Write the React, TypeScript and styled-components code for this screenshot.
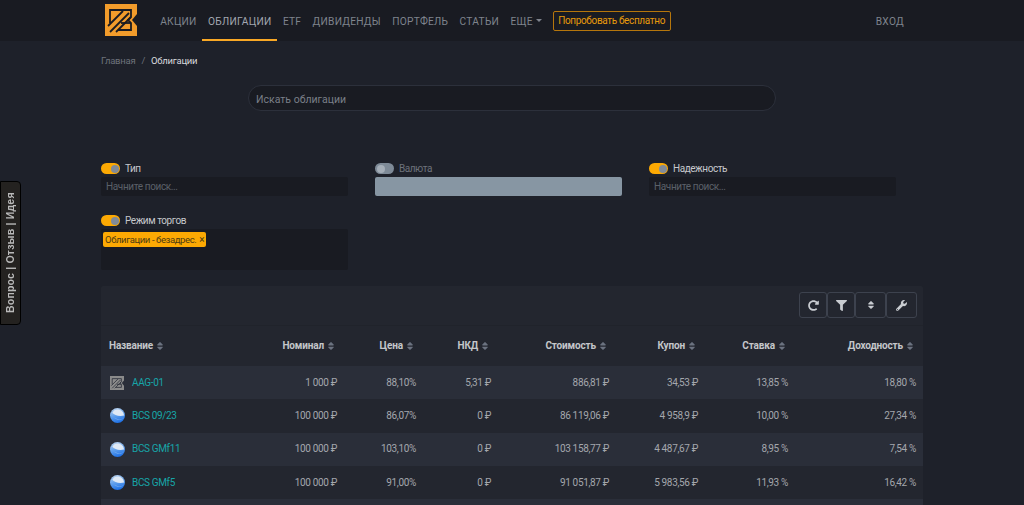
import styled, { createGlobalStyle } from "styled-components";
import { FaFilter, FaRedoAlt, FaSort, FaWrench } from "react-icons/fa";

const GlobalStyle = createGlobalStyle`
  html, body {
    margin: 0;
    height: 505px;
    overflow: hidden;
    background: #1e212a;
    font-family: Roboto, "Open Sans", sans-serif;
    font-size: 10px;
  }
`;

const NAV = [
  { label: "Акции" },
  { label: "Облигации", active: true },
  { label: "ETF" },
  { label: "Дивиденды" },
  { label: "Портфель" },
  { label: "Статьи" },
];

const COLUMNS = ["Номинал", "Цена", "НКД", "Стоимость", "Купон", "Ставка", "Доходность"];

const ROWS = [
  { name: "AAG-01", icon: "logo", cells: ["1 000 ₽", "88,10%", "5,31 ₽", "886,81 ₽", "34,53 ₽", "13,85 %", "18,80 %"] },
  { name: "BCS 09/23", icon: "globe", cells: ["100 000 ₽", "86,07%", "0 ₽", "86 119,06 ₽", "4 958,9 ₽", "10,00 %", "27,34 %"] },
  { name: "BCS GMf11", icon: "globe", cells: ["100 000 ₽", "103,10%", "0 ₽", "103 158,77 ₽", "4 487,67 ₽", "8,95 %", "7,54 %"] },
  { name: "BCS GMf5", icon: "globe", cells: ["100 000 ₽", "91,00%", "0 ₽", "91 051,87 ₽", "5 983,56 ₽", "11,93 %", "16,42 %"] },
];

const Logo = ({ size, color, bg }: { size: number; color: string; bg: string }) => (
  <svg width={size} height={size} viewBox="0 0 32 32">
    <rect width="32" height="32" fill={color} />
    <path d="M32 10l-5 6 5 6z" fill={bg} />
    <g fill="none" stroke={bg} strokeWidth="1.8">
      <path d="M5 19V6h21v7l-3 3 3 3v7H13" />
      <path d="M3 22L18 7" />
      <path d="M5 28L24 9" />
      <path d="M11 28L26 13" />
      <path d="M16 19h10" />
    </g>
  </svg>
);

const Globe = () => (
  <svg width="15" height="15" viewBox="0 0 16 16">
    <defs>
      <linearGradient id="globe-fill" x1="0.3" y1="0" x2="0.6" y2="1">
        <stop offset="0" stopColor="#b9d2ee" />
        <stop offset="0.5" stopColor="#5f9fec" />
        <stop offset="1" stopColor="#1a6ee6" />
      </linearGradient>
    </defs>
    <circle cx="8" cy="8" r="8" fill="url(#globe-fill)" />
    <path d="M2.500 5C4.500 7.500 9.500 9.500 15 8 14.500 4 12 1.500 8 1.500 5.500 1.500 3.500 2.800 2.500 5z" fill="#dfe9f5" />
    <path d="M2 8.500c2.500 3 8 4.500 12.500 2.500-2 1.500-7 2-9.500 0z" fill="#9cc4f2" />
  </svg>
);

const Filter = ({
  label,
  on = true,
}: {
  label: string;
  on?: boolean;
}) => (
  <FilterBlock>
    <FilterHead>
      <Toggle $on={on} />
      <FilterLabel $on={on}>{label}</FilterLabel>
    </FilterHead>
    <FilterInput $on={on}>Начните поиск...</FilterInput>
  </FilterBlock>
);

export default function App() {
  return (
    <>
      <GlobalStyle />
      <Header>
        <LogoLink>
          <Logo size={32} color="#f29c2b" bg="#191b22" />
        </LogoLink>
        <NavList>
          {NAV.map((item) => (
            <NavItem key={item.label} $active={item.active}>
              {item.label}
            </NavItem>
          ))}
          <NavItem>
            Еще
            <Caret />
          </NavItem>
        </NavList>
        <TryButton>Попробовать бесплатно</TryButton>
        <Login>Вход</Login>
      </Header>

      <Page>
        <Breadcrumbs>
          <Crumb>Главная</Crumb>
          <CrumbSep>/</CrumbSep>
          <CrumbCurrent>Облигации</CrumbCurrent>
        </Breadcrumbs>

        <SearchBox>Искать облигации</SearchBox>

        <Filters>
          <Filter label="Тип" />
          <Filter label="Валюта" on={false} />
          <Filter label="Надежность" />
          <FilterBlock>
            <FilterHead>
              <Toggle $on />
              <FilterLabel $on>Режим торгов</FilterLabel>
            </FilterHead>
            <TagBox>
              <Tag>
                Облигации - безадрес.
                <TagClose>×</TagClose>
              </Tag>
            </TagBox>
          </FilterBlock>
        </Filters>

        <Card>
          <Toolbar>
            <ToolGroup>
              <ToolButton $width={28}>
                <FaRedoAlt size={11} />
              </ToolButton>
              <ToolButton $width={28}>
                <FaFilter size={11} />
              </ToolButton>
              <ToolButton $width={31}>
                <FaSort size={10} />
              </ToolButton>
              <ToolButton $width={31}>
                <FaWrench size={11} />
              </ToolButton>
            </ToolGroup>
          </Toolbar>

          <HeadRow>
            <HeadName>
              Название
              <SortIcon />
            </HeadName>
            {COLUMNS.map((col) => (
              <HeadCell key={col}>
                {col}
                <SortIcon />
              </HeadCell>
            ))}
          </HeadRow>

          {ROWS.map((row, i) => (
            <Row key={row.name} $odd={i % 2 === 0}>
              <NameCell>
                <IconSlot>
                  {row.icon === "logo" ? <Logo size={14} color="#8b8b8b" bg="#2a2e39" /> : <Globe />}
                </IconSlot>
                <BondLink>{row.name}</BondLink>
              </NameCell>
              {row.cells.map((cell, j) => (
                <Cell key={j}>{cell}</Cell>
              ))}
            </Row>
          ))}
          <Row $odd />
        </Card>
      </Page>

      <Feedback>Вопрос | Отзыв | Идея</Feedback>
    </>
  );
}

const Header = styled.header`
  height: 41px;
  background: #191b22;
  display: flex;
  align-items: stretch;
  padding-left: 105px;
  padding-right: 120px;
`;

const LogoLink = styled.a`
  display: flex;
  align-items: center;
  margin-right: 17.500px;
  padding-bottom: 1px;
`;

const NavList = styled.nav`
  display: flex;
  align-items: stretch;
`;

const NavItem = styled.a<{ $active?: boolean }>`
  display: flex;
  align-items: center;
  padding: 1px 5.700px 0;
  font-size: 10.2px;
  letter-spacing: 0.25px;
  text-transform: uppercase;
  white-space: nowrap;
  color: ${({ $active }) => ($active ? "#a2a7b0" : "#7f848d")};
  box-shadow: ${({ $active }) => ($active ? "inset 0 -2px 0 #f9a825" : "none")};
`;

const Caret = styled.span`
  margin-left: 3px;
  margin-bottom: 1px;
  border-top: 3px solid #7f848d;
  border-left: 3px solid transparent;
  border-right: 3px solid transparent;
`;

const TryButton = styled.a`
  align-self: center;
  margin-left: 5.300px;
  height: 20px;
  box-sizing: border-box;
  padding: 0 4.500px;
  display: flex;
  align-items: center;
  border: 1px solid #b5760c;
  border-radius: 2px;
  color: #e79a0b;
  font-size: 10px;
  letter-spacing: -0.35px;
  white-space: nowrap;
`;

const Login = styled.a`
  margin-left: auto;
  padding-top: 1px;
  align-self: center;
  font-size: 10.2px;
  letter-spacing: 0.3px;
  text-transform: uppercase;
  color: #7f848d;
`;

const Page = styled.main`
  width: 822px;
  margin-left: 101px;
`;

const Breadcrumbs = styled.div`
  display: flex;
  align-items: center;
  height: 14px;
  margin-top: 12px;
  font-size: 9.500px;
  letter-spacing: -0.25px;
`;

const Crumb = styled.a`
  color: #6d727b;
`;

const CrumbSep = styled.span`
  color: #6d727b;
  margin: 0 6px;
`;

const CrumbCurrent = styled.span`
  color: #d8dade;
`;

const SearchBox = styled.div`
  box-sizing: border-box;
  width: 528px;
  height: 26px;
  margin: 18px auto 0;
  padding: 2px 0 0 7px;
  display: flex;
  align-items: center;
  background: #191b22;
  border: 1px solid #2c303b;
  border-radius: 13px;
  color: #7a7f88;
  font-size: 10.5px;
`;

const Filters = styled.section`
  display: grid;
  grid-template-columns: repeat(3, 247px);
  column-gap: 27px;
  row-gap: 19px;
  margin-top: 52px;
`;

const FilterBlock = styled.div`
  display: flex;
  flex-direction: column;
  gap: 3px;
`;

const FilterHead = styled.div`
  display: flex;
  align-items: center;
  height: 11px;
  gap: 5px;
`;

const Toggle = styled.span<{ $on: boolean }>`
  position: relative;
  width: 19px;
  height: 11px;
  border-radius: 6px;
  background: ${({ $on }) => ($on ? "#fca903" : "#7e8a97")};

  &::after {
    content: "";
    position: absolute;
    top: 1.500px;
    left: ${({ $on }) => ($on ? "10px" : "1.500px")};
    width: 8px;
    height: 8px;
    border-radius: 50%;
    background: ${({ $on }) => ($on ? "#818b98" : "#a5aeb8")};
  }
`;

const FilterLabel = styled.span<{ $on: boolean }>`
  font-size: 10px;
  letter-spacing: -0.45px;
  color: ${({ $on }) => ($on ? "#c6c8cc" : "#6d727b")};
`;

const FilterInput = styled.div<{ $on: boolean }>`
  box-sizing: border-box;
  height: 19px;
  padding-left: 5px;
  display: flex;
  align-items: center;
  border-radius: 2px;
  font-size: 10px;
  letter-spacing: -0.37px;
  background: ${({ $on }) => ($on ? "#191b22" : "#8796a3")};
  color: ${({ $on }) => ($on ? "#5b6069" : "#8796a3")};
`;

const TagBox = styled.div`
  box-sizing: border-box;
  height: 41px;
  padding: 3px 2px;
  background: #191b22;
  border-radius: 2px;
`;

const Tag = styled.span`
  display: inline-flex;
  align-items: center;
  height: 15px;
  padding: 0 2px;
  background: #fca903;
  border-radius: 2px;
  color: #4c3a12;
  font-size: 9.500px;
  letter-spacing: -0.4px;
`;

const TagClose = styled.span`
  margin-left: 3px;
  font-size: 10px;
`;

const Card = styled.section`
  margin-top: 16px;
  background: #23262f;
  border-radius: 2px;
`;

const Toolbar = styled.div`
  height: 40px;
  box-sizing: border-box;
  padding: 6px 6px 0 0;
  display: flex;
  justify-content: flex-end;
  border-bottom: 1px solid #20232b;
`;

const ToolGroup = styled.div`
  display: flex;
  height: 26px;
`;

const ToolButton = styled.button<{ $width: number }>`
  box-sizing: border-box;
  width: ${({ $width }) => $width}px;
  display: flex;
  align-items: center;
  justify-content: center;
  padding: 0;
  background: transparent;
  border: 1px solid #3d424e;
  border-radius: 3px;
  color: #c9ccd1;
`;

const COLUMN_GRID = "130px 113px 79px 75px 118px 89px 90px 128px";

const HeadRow = styled.div`
  display: grid;
  grid-template-columns: ${COLUMN_GRID};
  height: 40px;
  box-sizing: border-box;
  padding-bottom: 1px;
  align-items: center;
`;

const HeadCell = styled.div`
  display: flex;
  justify-content: flex-end;
  align-items: center;
  padding-right: 9px;
  font-size: 10px;
  font-weight: 700;
  letter-spacing: -0.15px;
  color: #c4c6ca;
`;

const HeadName = styled(HeadCell)`
  justify-content: flex-start;
  padding-left: 8px;
  padding-right: 0;
`;

const SortIcon = styled(FaSort)`
  margin-left: 3px;
  width: 8px;
  height: 10px;
  color: #6b7280;
`;

const Row = styled.div<{ $odd?: boolean }>`
  display: grid;
  grid-template-columns: ${COLUMN_GRID};
  height: 33.330px;
  align-items: center;
  background: ${({ $odd }) => ($odd ? "#2a2e39" : "#23262f")};
`;

const NameCell = styled.div`
  display: flex;
  align-items: center;
  padding-left: 8px;
`;

const IconSlot = styled.span`
  display: flex;
  justify-content: center;
  width: 16px;
  margin-right: 7px;
`;

const BondLink = styled.a`
  padding-bottom: 1px;
  color: #17a5a8;
  font-size: 10px;
  letter-spacing: -0.35px;
  white-space: nowrap;
`;

const Cell = styled.div`
  text-align: right;
  padding: 0 7px 1px 0;
  color: #a4a7ad;
  font-size: 10px;
  letter-spacing: -0.35px;
  white-space: nowrap;
`;

const Feedback = styled.a`
  position: fixed;
  left: 0;
  top: 181px;
  box-sizing: border-box;
  width: 21px;
  height: 144px;
  display: flex;
  align-items: center;
  justify-content: center;
  writing-mode: vertical-rl;
  transform: rotate(180deg);
  background: #242220;
  border: 1px solid #000;
  border-radius: 4px 0 0 4px;
  color: #b9b9b9;
  font-family: "Liberation Sans", Arial, sans-serif;
  font-weight: 700;
  font-size: 10.5px;
  letter-spacing: 0.2px;
`;
